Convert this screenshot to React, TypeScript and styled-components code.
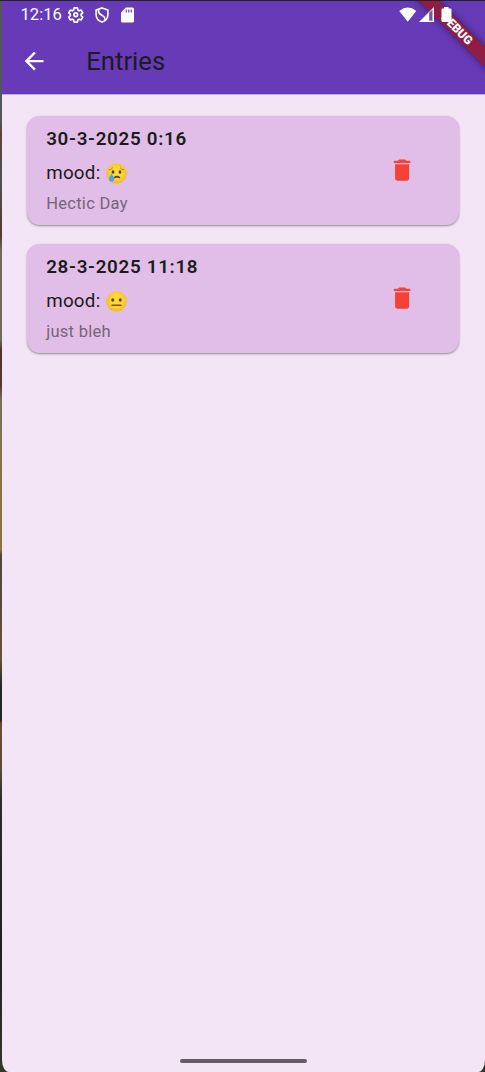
import React from 'react';
import styled, { createGlobalStyle } from 'styled-components';

const GlobalStyle = createGlobalStyle`
  * { box-sizing: border-box; }
  body { margin: 0; background: #333; font-family: Roboto, sans-serif; }
`;

const Desktop = styled.div`
  height: 1072px;
  width: 485px;
  padding: 1px 0 0 2px;
  background: linear-gradient(
    180deg, #222 0, #222 1px, #555758 1px, #50565a 120px, #60403a 135px, #4e5256 180px,
    #55382f 235px, #6f6a5a 250px, #6f6a5a 340px, #4e332c 350px, #55382f 385px,
    #776f5c 400px, #8a7440 500px, #8a7440 550px, #51453f 555px, #66503a 660px,
    #25282b 685px, #25282b 720px, #6a4d30 724px, #5c4a38 770px, #2a2c2d 800px, #1f2120 950px, #35352f 1072px
  );
`;

const Screen = styled.div`
  position: relative;
  display: flex;
  flex-direction: column;
  height: 100%;
  overflow: hidden;
  background: #f3e5f5;
  border-radius: 0 0 7px 7px / 0 0 12px 12px;
`;

const Header = styled.header`
  height: 94px;
  border-bottom: 1px solid #c3a8dc;
  background: #673ab7;
  color: #fff;
`;

const StatusBar = styled.div`
  position: relative;
  z-index: 2;
  display: flex;
  align-items: center;
  justify-content: space-between;
  height: 27px;
  padding: 0 30px 0 18.5px;
`;

const StatusGroup = styled.div<{ $gap: number }>`
  display: flex;
  align-items: center;
  gap: ${(p) => p.$gap}px;
`;

const Clock = styled.span`
  font-size: 16.6px;
  line-height: 28px;
  margin-right: -6px;
`;

const Icon = styled.svg`
  display: block;
  flex: none;
  overflow: visible;
`;

const Toolbar = styled.div`
  display: flex;
  align-items: center;
  height: 66px;
  padding-left: 18px;
`;

const IconButton = styled.button`
  display: block;
  padding: 0;
  border: 0;
  background: none;
  color: inherit;
`;

const Title = styled.h1`
  margin: 0 0 0 38px;
  color: #1d1b20;
  font-size: 25.7px;
  font-weight: 400;
  line-height: 32px;
`;

const Ribbon = styled.div`
  position: absolute;
  z-index: 1;
  top: 20.5px;
  left: 394.5px;
  width: 120px;
  height: 14.2px;
  transform: rotate(45deg);
  background: rgba(160, 20, 28, 0.72);
  box-shadow: 0 0 7px rgba(0, 0, 0, 0.5);
  color: #fff;
  font-size: 12px;
  font-weight: 900;
  line-height: 14.2px;
  text-align: center;
`;

const Entries = styled.main`
  display: flex;
  flex: 1;
  flex-direction: column;
  gap: 19px;
  padding: 20.5px 26px 0 25.2px;
`;

const Card = styled.article`
  display: flex;
  align-items: center;
  justify-content: space-between;
  height: 109px;
  padding: 0 42.5px 0 19px;
  border-radius: 13px;
  background: #e1bee7;
  box-shadow: 0 1px 2px rgba(0, 0, 0, 0.3), 0 1px 3px rgba(0, 0, 0, 0.12);
  color: #f44336;
`;

const Details = styled.div`
  display: flex;
  flex-direction: column;
  padding-top: 1.5px;
  color: #1d1b20;
`;

const EntryDate = styled.h2`
  margin: 0;
  font-size: 18.8px;
  font-weight: 600;
  letter-spacing: 0.7px;
  line-height: 27px;
`;

const Mood = styled.div`
  display: flex;
  align-items: center;
  gap: 6px;
  height: 40px;
  font-size: 18.8px;
  letter-spacing: 0.25px;
`;

const Note = styled.p`
  margin: 0;
  color: #75647a;
  font-size: 16.5px;
  letter-spacing: 0.28px;
  line-height: 22px;
`;

const HomeIndicator = styled.div`
  align-self: center;
  width: 127px;
  height: 4.5px;
  margin: 0 1px 9px 0;
  border-radius: 3px;
  background: #655c68;
`;

type Feeling = 'sad' | 'neutral';

const Face = ({ feeling }: { feeling: Feeling }) => (
  <Icon width="21" height="21" viewBox="0 0 42 42" role="img" aria-label={feeling}>
    <defs>
      <radialGradient id={`face-${feeling}`} cx="50%" cy="45%" r="55%">
        <stop offset="0.5" stopColor="#fdd835" />
        <stop offset="1" stopColor="#f4b52f" />
      </radialGradient>
    </defs>
    <circle cx="21" cy="21" r="20.5" fill={`url(#face-${feeling})`} />
    {feeling === 'sad' ? (
      <>
        <path d="M6 14q5-1 8-5M36 14q-5-1-8-5" fill="none" stroke="#a8752e" strokeWidth="1.8" />
        <ellipse cx="14" cy="18" rx="2.7" ry="3.3" fill="#4d3a2b" />
        <ellipse cx="28" cy="18" rx="2.7" ry="3.3" fill="#4d3a2b" />
        <path d="M17 29q5-3.500 10 0" fill="none" stroke="#4d3528" strokeWidth="3" strokeLinecap="round" />
        <path d="M11 20C10 25 6 27 6 32a5.2 5.2 0 0 0 10.4 0C16.4 27 12 25 11 20z" fill="#40a9ed" />
      </>
    ) : (
      <>
        <ellipse cx="13.5" cy="18" rx="3" ry="3.5" fill="#5a4520" />
        <ellipse cx="28.5" cy="18" rx="3" ry="3.5" fill="#5a4520" />
        <path d="M12 28.5h18" stroke="#75571f" strokeWidth="3" strokeLinecap="round" />
      </>
    )}
  </Icon>
);

const TrashIcon = () => (
  <Icon width="28.2" height="28.2" viewBox="0 0 24 24" fill="currentColor">
    <path d="M6 19c0 1.1.9 2 2 2h8c1.1 0 2-.9 2-2V7H6v12zM19 4h-3.5l-1-1h-5l-1 1H5v2h14V4z" />
  </Icon>
);

const entries: { date: string; feeling: Feeling; note: string }[] = [
  { date: '30-3-2025 0:16', feeling: 'sad', note: 'Hectic Day' },
  { date: '28-3-2025 11:18', feeling: 'neutral', note: 'just bleh' },
];

export default function App() {
  return (
    <Desktop>
      <GlobalStyle />
      <Screen>
        <Header>
          <StatusBar>
            <StatusGroup $gap={11.8}>
              <Clock>12:16</Clock>
              <Icon width="15.5" height="15.5" viewBox="0 0 16 16" fill="none" stroke="#fff" strokeWidth="1.8" strokeLinejoin="round">
                <path d="M6.3 1h3.4l.5 2.1 1.3.8 2.1-.7 1.6 2.9-1.6 1.4v1.5l1.6 1.4-1.6 2.9-2.1-.7-1.3.8-.5 2.1H6.3l-.5-2.1-1.3-.8-2.1.7-1.6-2.9L2.4 9V7.5L.8 6.1l1.6-2.9 2.1.7 1.3-.8z" />
                <circle cx="8" cy="8" r="1.9" />
              </Icon>
              <Icon width="14" height="16" viewBox="0 0 14 16" fill="none" stroke="#fff" strokeWidth="1.6">
                <path d="M7 .9l5.9 2.1v4.5c0 3.5-2.4 6.3-5.9 7.6-3.5-1.3-5.9-4.1-5.9-7.6V3z" />
                <path d="M3.6 2.2v2.6c0 3.4 6.3 3.6 6.3 6.7v1.500" />
              </Icon>
              <Icon width="13" height="16" viewBox="0 0 13 16" fill="#fff">
                <path fillRule="evenodd" d="M4.8.5h6.7q1.5 0 1.5 1.5v12q0 1.5-1.5 1.5h-10Q0 15.5 0 14V5.3zM4.7 2.5v3h1.2v-3zM7.2 2.5v3h1.2v-3zM9.7 2.5v3h1.2v-3z" />
              </Icon>
            </StatusGroup>
            <StatusGroup $gap={2.5}>
              <Icon width="17.5" height="15" viewBox="0 0 17 15" fill="#fff">
                <path d="M8.5 14.7L0 3.9Q8.5-3 17 3.9z" />
              </Icon>
              <Icon width="15" height="15" viewBox="0 0 15 15">
                <path d="M0 15L15 0v15z" fill="#fff" />
                <path d="M10.2 5.8L13.5 2.5v11.2h-3.3z" fill="#71569f" />
              </Icon>
              <Icon width="19" height="16" viewBox="0 0 19 16" fill="#fff">
                <path d="M8 0h4.5v1.5h2Q15.5 1.5 15.5 2.5v11.5q0 1-1 1h-8q-1 0-1-1V2.5q0-1 1-1H8z" />
              </Icon>
            </StatusGroup>
          </StatusBar>
          <Toolbar>
            <IconButton aria-label="Back">
              <Icon width="28.2" height="28.2" viewBox="0 0 24 24" fill="currentColor">
                <path d="M20 11H7.83l5.59-5.59L12 4l-8 8 8 8 1.41-1.41L7.83 13H20v-2z" />
              </Icon>
            </IconButton>
            <Title>Entries</Title>
          </Toolbar>
        </Header>
        <Ribbon>DEBUG</Ribbon>
        <Entries>
          {entries.map((entry) => (
            <Card key={entry.date}>
              <Details>
                <EntryDate>{entry.date}</EntryDate>
                <Mood>
                  <span>mood:</span>
                  <Face feeling={entry.feeling} />
                </Mood>
                <Note>{entry.note}</Note>
              </Details>
              <IconButton aria-label="Delete">
                <TrashIcon />
              </IconButton>
            </Card>
          ))}
        </Entries>
        <HomeIndicator />
      </Screen>
    </Desktop>
  );
}
